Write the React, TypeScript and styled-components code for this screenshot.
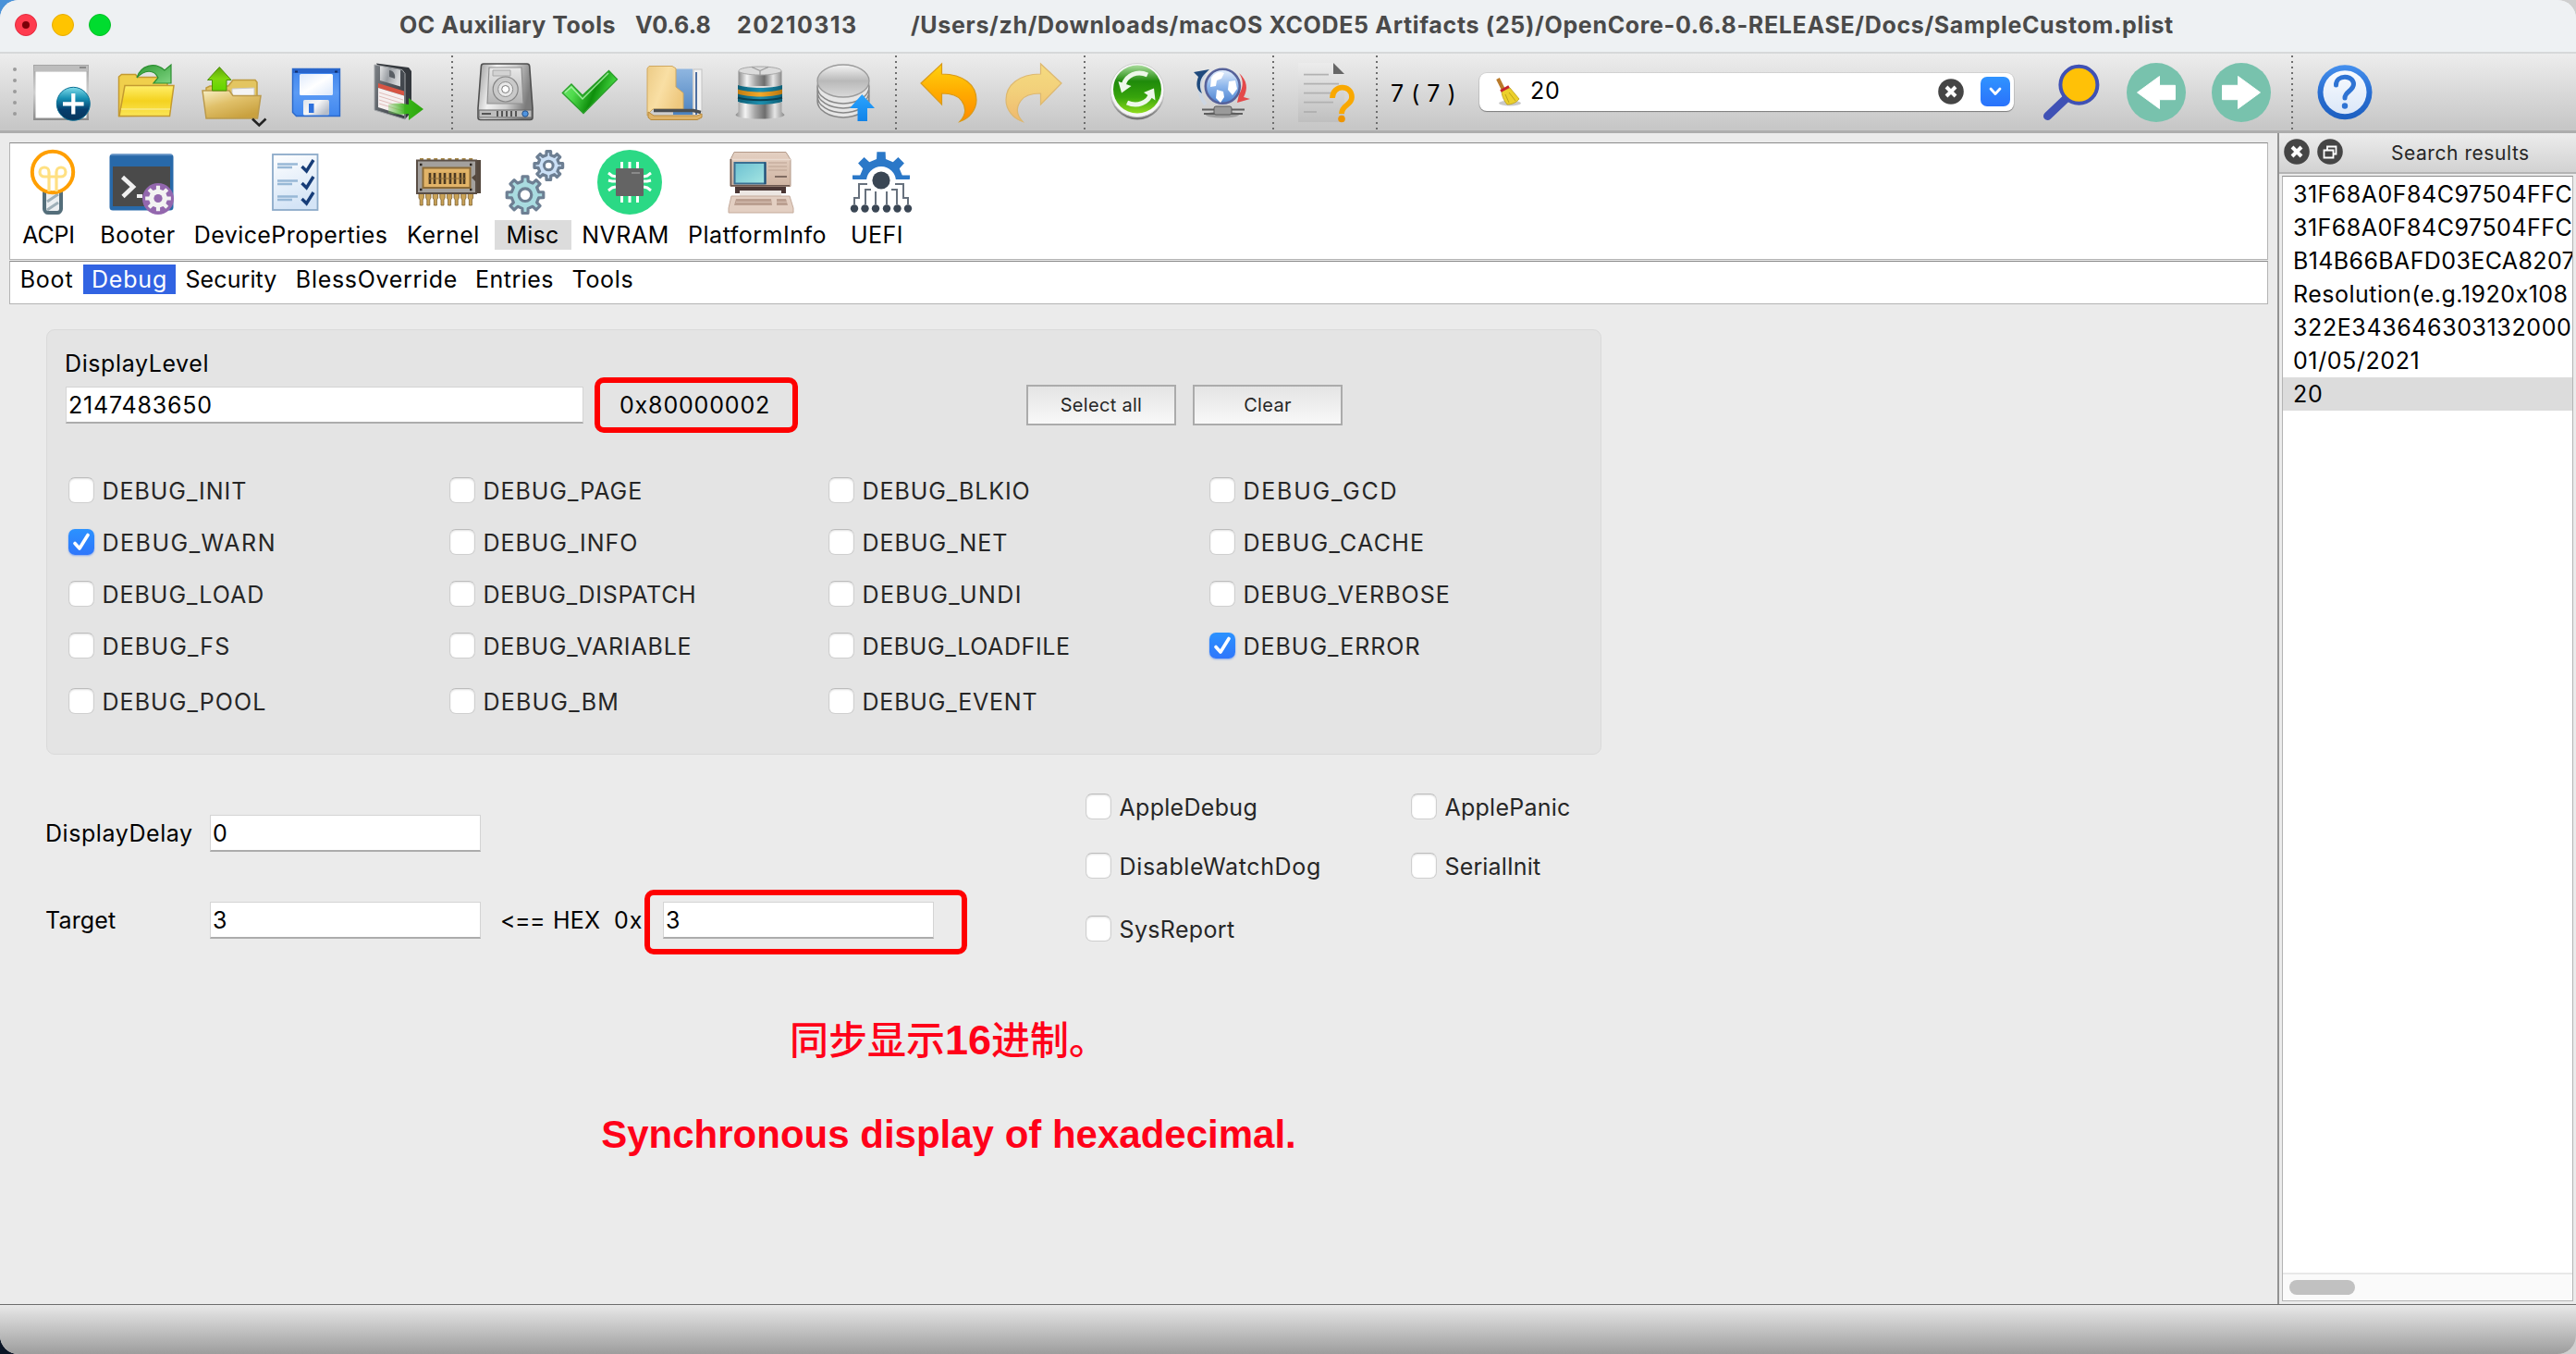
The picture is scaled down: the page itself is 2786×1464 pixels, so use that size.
import React from "react";
import styled, { createGlobalStyle, css } from "styled-components";

const Global = createGlobalStyle`
  html, body { margin: 0; padding: 0; }
  body {
    font-family: Inter, "Noto Sans CJK SC", sans-serif;
    font-size: 25px;
    line-height: 32px;
    color: #000;
    font-feature-settings: "calt" 0, "liga" 0;
    overflow: hidden;
  }
  *, *::before, *::after { box-sizing: border-box; }
`;

/* ---------- window chrome ---------- */

const Desktop = styled.div`
  width: 2786px;
  height: 1464px;
  background:
    linear-gradient(90deg, transparent 50%, #cfcfcf 50%),
    linear-gradient(180deg, #4a92d8 0%, #4a92d8 40%, #0b1526 60%);
`;

const Window = styled.div`
  display: flex;
  flex-direction: column;
  width: 2786px;
  height: 1464px;
  overflow: hidden;
  border-radius: 20px;
  background: #ebebeb;
`;

const TitleBar = styled.header`
  display: flex;
  align-items: center;
  flex: none;
  height: 58px;
  padding: 0 16px 3px;
  background: #eef1f3;
  border-bottom: 2px solid #d6d8d9;
`;

const Lights = styled.div`
  display: flex;
  gap: 16px;
  width: 416px;
`;

const Light = styled.span<{ $fill: string; $rim: string }>`
  display: grid;
  place-items: center;
  width: 24px;
  height: 24px;
  border-radius: 50%;
  background: ${(p) => p.$fill};
  border: 1px solid ${(p) => p.$rim};
`;

const LightDot = styled.i`
  width: 8px;
  height: 8px;
  border-radius: 50%;
  background: #7a0008;
`;

const TitlePart = styled.span<{ $width: number; $track: number }>`
  width: ${(p) => p.$width}px;
  font-weight: 700;
  letter-spacing: ${(p) => p.$track}px;
  color: #4a4a4a;
  white-space: pre;
`;

/* ---------- toolbar ---------- */

const Toolbar = styled.div`
  display: flex;
  align-items: center;
  flex: none;
  height: 86px;
  padding: 1px 0 0 14px;
  background: linear-gradient(180deg, #ededed 0%, #c7c7c7 96%);
  border-bottom: 3px solid #adadad;
`;

const Handle = styled.div`
  display: flex;
  flex-direction: column;
  gap: 8px;
  width: 20px;
  margin-top: -3px;

  i {
    width: 4px;
    height: 4px;
    border-radius: 50%;
    background: #9b9b9b;
  }
`;

const ToolGroup = styled.div`
  display: flex;
  gap: 28px;
`;

const Tool = styled.button`
  display: block;
  width: 64px;
  height: 64px;
  padding: 0;
  border: 0;
  background: none;
`;

const Separator = styled.div`
  width: 48px;
  height: 80px;
  padding-left: 22px;

  &::before {
    content: "";
    display: block;
    width: 2px;
    height: 100%;
    background: repeating-linear-gradient(180deg, #6e6e6e 0 2px, transparent 2px 6px);
  }
`;

const MatchCount = styled.div`
  width: 97px;
  margin-left: -11px;
  padding: 2px 0 0 1px;
  letter-spacing: 0.5px;
  white-space: pre;
`;

const SearchBox = styled.div`
  display: flex;
  align-items: center;
  width: 578px;
  height: 41px;
  margin: -2px 30px 0 0;
  padding: 0 4px 0 16px;
  border-radius: 8px;
  background: #fff;
  box-shadow: 0 1px 1px rgba(0, 0, 0, 0.35), 0 0 0 1px rgba(0, 0, 0, 0.08);
`;

const SearchValue = styled.span`
  flex: 1;
  margin-left: 9px;
  padding-bottom: 2px;
  letter-spacing: 0.7px;
`;

const ComboButton = styled.span`
  display: grid;
  place-items: center;
  width: 32px;
  height: 32px;
  margin-left: 18px;
  border-radius: 7px;
  background: linear-gradient(180deg, #2f93ff, #2a72fb);
`;

/* ---------- body ---------- */

const Body = styled.div`
  display: flex;
  flex: 1;
  min-height: 0;
`;

const Main = styled.main`
  width: 2463px;
  padding: 10px 10px 0;
`;

const frame = css`
  display: flex;
  border: 1px solid #b4b4b4;
  border-top-color: #8a8a8a;
  background: #fff;
`;

const CategoryBar = styled.nav`
  ${frame}
  height: 127px;
  margin-bottom: 1px;
  padding: 7px 0 0 1px;
`;

const Category = styled.div<{ $width: number; $shift?: number }>`
  display: flex;
  flex-direction: column;
  gap: 6px;
  align-items: center;
  width: ${(p) => p.$width}px;

  svg {
    display: block;
    position: relative;
    left: ${(p) => p.$shift ?? 4}px;
  }
`;

const CategoryLabel = styled.span<{ $active?: boolean; $track: number }>`
  padding: 0 13px;
  background: ${(p) => (p.$active ? "#dcdcdc" : "transparent")};
  letter-spacing: ${(p) => p.$track}px;
`;

const TabBar = styled.nav`
  ${frame}
  height: 47px;
  padding-top: 3px;
`;

const Tab = styled.span<{ $width: number; $track: number; $active?: boolean }>`
  width: ${(p) => p.$width}px;
  height: 32px;
  text-align: center;
  letter-spacing: ${(p) => p.$track}px;
  background: ${(p) => (p.$active ? "#3163e2" : "transparent")};
  color: ${(p) => (p.$active ? "#fff" : "#000")};
`;

const LevelPanel = styled.section`
  width: 1682px;
  height: 460px;
  margin: 27px 0 0 40px;
  padding: 22px 20px 0;
  border: 1px solid #dadada;
  border-radius: 9px;
  background: #e4e4e4;
`;

const Text = styled.span<{ $track?: number; $width?: number; $nudge?: number }>`
  display: block;
  flex: none;
  width: ${(p) => (p.$width ? `${p.$width}px` : "auto")};
  margin-left: ${(p) => p.$nudge ?? 0}px;
  letter-spacing: ${(p) => p.$track ?? 0.6}px;
  line-height: 28px;
  white-space: pre;
`;

const Field = styled.div<{ $width: number }>`
  flex: none;
  width: ${(p) => p.$width}px;
  height: 40px;
  padding: 1px 0 0 2px;
  border: 1px solid #d4d4d4;
  border-bottom: 2px solid #acacac;
  background: #fff;
  line-height: 36px;
  letter-spacing: 0.8px;
`;

const LevelRow = styled.div`
  display: flex;
  align-items: center;
  height: 44px;
  margin-top: 9px;
`;

const Callout = styled.div<{ $width: number; $height: number; $drop?: number }>`
  display: flex;
  flex: none;
  align-items: center;
  width: ${(p) => p.$width}px;
  height: ${(p) => p.$height}px;
  margin-top: ${(p) => p.$drop ?? 0}px;
  padding-bottom: ${(p) => p.$drop ?? 0}px;
  border: 6px solid #fe0000;
  border-radius: 10px;
`;

const PushButton = styled.button`
  width: 162px;
  height: 44px;
  margin-right: 18px;
  padding: 0;
  border: 2px solid #ababab;
  background: linear-gradient(180deg, #e4e4e4, #f8f8f8);
  font: 20px/38px Inter, sans-serif;
  letter-spacing: 0.3px;
  color: #262626;
`;

const Spacer = styled.div<{ $width: number }>`
  flex: none;
  width: ${(p) => p.$width}px;
`;

const FlagGrid = styled.div`
  display: grid;
  grid-template-columns: 412px 410px 412px auto;
  grid-template-rows: 56px 56px 56px 60px 28px;
  grid-auto-flow: column;
  margin: 56px 0 0 3px;
`;

const Check = styled.label<{ $track: number }>`
  display: flex;
  gap: 8.5px;
  height: 28px;
  line-height: 30px;
  color: #262626;
  letter-spacing: ${(p) => p.$track - 0.15}px;
`;

const Tick = styled.span<{ $on?: boolean }>`
  display: grid;
  place-items: center;
  width: 28px;
  height: 28px;
  border-radius: 7px;
  ${(p) =>
    p.$on
      ? css`
          background: linear-gradient(180deg, #2b92ff, #2f76fb);
          box-shadow: 0 1px 2px rgba(40, 110, 250, 0.5);
        `
      : css`
          background: #fff;
          border: 1px solid #cfcfcf;
          border-top-color: #bcbcbc;
          box-shadow: inset 0 1px 2px rgba(0, 0, 0, 0.12);
        `}
`;

const Lower = styled.section`
  display: flex;
  padding-left: 39px;
`;

const Fields = styled.div`
  display: flex;
  flex-direction: column;
  gap: 54px;
  width: 1125px;
  padding-top: 65px;
`;

const FieldRow = styled.div`
  display: flex;
  align-items: center;
  height: 40px;
`;

const Options = styled.div`
  display: grid;
  grid-template-columns: 352px auto;
  grid-template-rows: 64px 68px 28px;
  padding-top: 42px;
`;

const Notes = styled.div`
  width: 800px;
  margin: 59px 0 0 616px;
  text-align: center;
  font: 700 42px/100px "Liberation Sans", "Noto Sans CJK SC", sans-serif;
  color: #ff0019;
  white-space: nowrap;

  p {
    height: 100px;
    margin: 0;
  }

  p:first-child {
    line-height: 90px;
  }
`;

const Han = styled.span`
  font-weight: 500;
  font-family: "Noto Sans CJK SC", sans-serif;
`;

const Digits = styled.span`
  font-size: 45px;
`;

/* ---------- dock ---------- */

const Dock = styled.aside`
  display: flex;
  flex-direction: column;
  width: 323px;
  border-left: 2px solid #929292;
`;

const DockHeader = styled.div`
  display: flex;
  align-items: center;
  gap: 8px;
  height: 44px;
  padding: 0 0 2px 5px;
  border-bottom: 2px solid #b4b4b4;
  background: linear-gradient(180deg, #ececec, #d2d2d2);
`;

const DockTitle = styled.span`
  margin-left: 44px;
  padding-top: 4px;
  font-size: 21px;
  letter-spacing: 0.55px;
  color: #262626;
`;

const ResultList = styled.div`
  display: flex;
  flex-direction: column;
  flex: 1;
  margin: 2px 3px 3px 3px;
  border: 1px solid #b4b4b4;
  border-top-color: #8a8a8a;
  background: #fff;
  overflow: hidden;
`;

const Result = styled.div<{ $track: number; $active?: boolean }>`
  flex: none;
  height: 36px;
  padding-left: 11px;
  line-height: 36px;
  letter-spacing: ${(p) => p.$track}px;
  white-space: nowrap;
  background: ${(p) => (p.$active ? "#dcdcdc" : "transparent")};

  &:first-child {
    margin-top: 1px;
  }
`;

const ScrollTrack = styled.div`
  height: 30px;
  margin-top: auto;
  padding: 6px 7px;
  border-top: 2px solid #e8e8e8;
  background: #fafafa;
`;

const ScrollThumb = styled.div`
  width: 71px;
  height: 16px;
  border-radius: 8px;
  background: #c1c1c1;
`;

const StatusBar = styled.footer`
  flex: none;
  height: 54px;
  border-top: 1px solid #6c6c6c;
  background: linear-gradient(180deg, #e8e8e8, #9d9d9d);
`;

/* ---------- toolbar icons, drawn on a 64 unit square ---------- */

const Icon = ({ children, size = 64 }: { children: React.ReactNode; size?: number }) => (
  <svg width={size} height={size} viewBox={`0 0 ${size} ${size}`} overflow="visible" fill="none" display="block">
    {children}
  </svg>
);

const Grad = ({ id, stops, x2 = 0, y2 = 1 }: { id: string; stops: string[]; x2?: number; y2?: number }) => (
  <linearGradient id={id} x1="0" y1="0" x2={x2} y2={y2}>
    {stops.map((c, i) => (
      <stop key={i} offset={i / (stops.length - 1)} stopColor={c} />
    ))}
  </linearGradient>
);

const NewDocIcon = () => (
  <Icon>
    <Grad id="nd1" stops={["#a5a5a5", "#cfcfcf", "#8b8b8b"]} />
    <Grad id="nd2" stops={["#7fdcea", "#1791b4", "#063f6e", "#08355c"]} />
    <rect x="2" y="2" width="60" height="60" fill="url(#nd1)" />
    <rect x="3" y="3" width="58" height="6" fill="#bdbdbd" />
    <path d="M52 5h7" stroke="#8a8a8a" strokeWidth="2" />
    <rect x="4.500" y="9.500" width="55" height="50" fill="#fff" />
    <circle cx="45.300" cy="44.300" r="18" fill="url(#nd2)" stroke="#0d6f94" strokeWidth="1" />
    <path d="M45.300 33v22.500M34 44.300h22.600" stroke="#fff" strokeWidth="4.200" />
  </Icon>
);

const OpenIcon = () => (
  <Icon>
    <Grad id="op1" stops={["#ffef6b", "#f4d21f", "#fbe658"]} />
    <Grad id="op2" stops={["#2f9a34", "#7fd482"]} x2={1} />
    <path d="M2.500 57.500V15l3-2.500h15l2.500 3h29l3 4V57z" fill="#f0cf4c" stroke="#c49a30" strokeWidth="1.500" />
    <path d="M9 24.500h53L57.500 57.500H3z" fill="url(#op1)" stroke="#c49a30" strokeWidth="1.500" />
    <path d="M5 50h53" stroke="#f9ea86" strokeWidth="1.500" />
    <path d="M22 16C26 3 41-2 52 8l7-6v20H40l5-6C40 6 30 8 22 16z" fill="url(#op2)" stroke="#2c8f31" strokeWidth="1.200" />
  </Icon>
);

const ImportIcon = () => (
  <Icon>
    <Grad id="im1" stops={["#f8efc4", "#e0c069", "#c9a13f"]} x2={0.6} />
    <Grad id="im2" stops={["#5fa30c", "#7fd80f", "#62d400"]} />
    <path d="M5 58V27l4-2h20l5-6.500h24l2 2.500v34z" fill="#e3c561" stroke="#bf9c40" strokeWidth="1.500" />
    <path d="M33 28l24-1v9H33z" fill="#f4f4f4" stroke="#c9c9c9" strokeWidth="1" />
    <path d="M1 30h29l4 5.500h30L60.500 60H5z" fill="url(#im1)" stroke="#bb9a4c" strokeWidth="1.500" />
    <path d="M19.300 4.500L32 18.500h-5V30H11.500V18.500h-5z" fill="url(#im2)" stroke="#4d8f0a" strokeWidth="1" />
    <path d="M55 60.500l7.300 7 7.200-7" stroke="#222" strokeWidth="2.600" />
  </Icon>
);

const SaveIcon = () => (
  <Icon>
    <Grad id="sv1" stops={["#3f84ec", "#5b9bf5", "#4187ee"]} />
    <Grad id="sv2" stops={["#dfeafc", "#ffffff", "#dbe8fb"]} x2={1} />
    <Grad id="sv3" stops={["#dfe3ea", "#f7f7f7", "#b6bdc9"]} x2={1} y2={0.6} />
    <path d="M6.500 6.500h51v51h-47l-4-4z" fill="url(#sv1)" stroke="#2b68c9" strokeWidth="1.400" />
    <path d="M7 7h50v4H7z" fill="#2965cc" />
    <path d="M9 9.500h3M52 9.500h3" stroke="#102f6c" strokeWidth="2" />
    <rect x="14" y="12" width="36" height="23" rx="1.500" fill="url(#sv2)" />
    <rect x="18" y="40" width="28" height="16.500" rx="1.500" fill="url(#sv3)" />
    <rect x="24" y="44" width="5.500" height="10" fill="#2e71dc" />
  </Icon>
);

const ExportIcon = () => (
  <Icon>
    <Grad id="ex1" stops={["rgba(120,200,95,0.35)", "#39b51a", "#2ba60c"]} x2={1} y2={0} />
    <Grad id="ex2" stops={["#7d8186", "#565b61", "#3f444a"]} x2={1} y2={0.4} />
    <Grad id="ex3" stops={["#e4e5e6", "#9a9ea3", "#d6d8da"]} x2={1} y2={0.3} />
    <path d="M5 0.500l35 4.500 3 4v44l-7 8z" fill="#34383d" />
    <path d="M3 2l30 5.500 3 4V61L3 51z" fill="url(#ex2)" stroke="#a4a7aa" strokeWidth="1" />
    <path d="M9 3.500l22 4v18L9 19z" fill="url(#ex3)" />
    <path d="M19 8c4 0 7 4 6 9l-6-2z" fill="#5a5f65" />
    <path d="M7 22l28 8.500v5L7 27z" fill="#d75443" />
    <path d="M7 27l28 8.500V57L7 48z" fill="#f6f0f0" />
    <path d="M8 32l26 8M8 36l26 8M8 40l26 8M8 44l26 8" stroke="#e0bdba" strokeWidth="1" />
    <path d="M18 45c8-2 14-1 22 0v-7l16 12-16 12v-7c-8 1-14 1-22-1z" fill="url(#ex1)" />
  </Icon>
);

const DiskIcon = () => (
  <Icon>
    <Grad id="hd1" stops={["#9a9a9a", "#f2f2f2", "#cfcfcf", "#7c7c7c"]} x2={1} y2={0.25} />
    <Grad id="hd2" stops={["#e9e9e9", "#b4b4b4"]} />
    <path d="M9 1h47c1.500 0 2.500 1 2.700 2.500L62 49v10c0 1.500-1 2.500-2.500 2.500h-54C4 61.500 3 60.500 3 59V49L6.400 3.500C6.500 2 7.500 1 9 1z" fill="url(#hd1)" stroke="#4f4f4f" strokeWidth="1.600" />
    <path d="M15 5h35l2 39H13z" fill="url(#hd2)" stroke="#8f8f8f" strokeWidth="1.200" />
    <path d="M19 8h19v6H19z" fill="#d3d3d3" stroke="#a8a8a8" strokeWidth="1" />
    <circle cx="32.700" cy="28.500" r="13.500" fill="#c9c9c9" stroke="#858585" strokeWidth="1.200" />
    <circle cx="32.700" cy="28.500" r="8" fill="#e8e8e8" stroke="#8d8d8d" strokeWidth="1" />
    <circle cx="32.700" cy="28.500" r="4" fill="#fff" stroke="#777" strokeWidth="1" />
    <path d="M4 51h57v8H4z" fill="#bdbdbd" stroke="#666" strokeWidth="1" />
    <path d="M7 55h10M24 52v6M29 52v6M34 52v6M39 52v6M44 52v6" stroke="#555" strokeWidth="2" />
    <circle cx="54" cy="55" r="3.200" fill="#4f94e0" stroke="#234f86" strokeWidth="1" />
  </Icon>
);

const CheckIcon = () => (
  <Icon>
    <Grad id="ck1" stops={["#7ee87c", "#4fdb4c", "#0f8f0c", "#4be048"]} x2={1} y2={0.3} />
    <path d="M2.300 32.500L12 23l12 12.300L52.500 8.300l9 9.500L25 54.500z" fill="url(#ck1)" stroke="#2a9e2a" strokeWidth="1.300" />
    <path d="M5 32l7-6 12 13L52 11" stroke="#b8f5b5" strokeWidth="1.500" opacity="0.8" />
  </Icon>
);

const BinderIcon = () => (
  <Icon>
    <Grad id="bd1" stops={["#eccb86", "#f9dfa4", "#eec87e"]} x2={1} y2={0.5} />
    <Grad id="bd2" stops={["#8fb6e0", "#4d83c0"]} />
    <rect x="52" y="7" width="9" height="50" fill="#f2f2f2" stroke="#c2c2c2" strokeWidth="1" />
    <path d="M55 10v46" stroke="#3a5f97" strokeWidth="1.800" />
    <path d="M30 6.500h21V56H30z" fill="url(#bd2)" />
    <path d="M4 3.500h25l4 2.500v20l8 6.500V50H8l-3 3-3 4V6z" fill="url(#bd1)" stroke="#cfa861" strokeWidth="1" />
    <path d="M9 51.500h43l8 2" stroke="#4b4f52" strokeWidth="3.600" />
    <path d="M3 53v6l3 2.500h50l5-2.500v-4l-5 2H9z" fill="#dfb368" stroke="#b98a3c" strokeWidth="1" />
  </Icon>
);

const DatabaseIcon = () => (
  <Icon>
    <Grad id="db1" stops={["#8a8a8a", "#f4f4f4", "#a5a5a5", "#6d6d6d", "#e6e6e6", "#8b8b8b"]} x2={1} y2={0} />
    <Grad id="db2" stops={["#0c5f77", "#1e8fae", "#0d6078"]} x2={1} y2={0} />
    <Grad id="db3" stops={["#c07c12", "#f3a929", "#b8760f"]} x2={1} y2={0} />
    <path d="M8.500 43h47v10l3 3c0 3-12 4.500-26.500 4.500S5.500 59 5.500 56l3-3z" fill="url(#db1)" />
    <path d="M8.500 9c6-6 41-6 47 0v16h-47z" fill="url(#db1)" />
    <ellipse cx="32" cy="8.500" rx="23" ry="4.500" fill="#dcdcdc" stroke="#a8a8a8" strokeWidth="1" />
    <path d="M32 8.500l-9-4M32 8.500l9-4M32 8.500V13" stroke="#999" strokeWidth="1.200" />
    <path d="M8 24c12 4 36 4 48 0v18c-12 4-36 4-48 0z" fill="url(#db2)" />
    <path d="M8 28.500c12 4 36 4 48 0v5c-12 4-36 4-48 0z" fill="url(#db3)" />
    <path d="M8 37.500c12 3.600 36 3.600 48 0" stroke="#083f50" strokeWidth="2" />
  </Icon>
);

const StackUpIcon = () => (
  <Icon>
    <Grad id="st1" stops={["#f4f4f4", "#b9b9b9", "#d9d9d9"]} />
    <Grad id="st2" stops={["#2aa4ff", "#1183e8"]} />
    {[41, 36, 31, 26].map((y) => (
      <ellipse key={y} cx="30" cy={y} rx="28" ry="18" fill="#e6e6e6" stroke="#868686" strokeWidth="1.500" />
    ))}
    <ellipse cx="30" cy="19.500" rx="28" ry="17.500" fill="url(#st1)" stroke="#9b9b9b" strokeWidth="1.300" />
    <path d="M50.300 34L64 49h-8v14H45.500V49H37z" fill="url(#st2)" />
  </Icon>
);

const arrowPath = "M2 22L24.500 1v11C48 12 62 24 62 40c0 10-7 20-18 23.500C51 56 51 48 46 41c-4-6-12-8-21.500-8v12z";

const UndoIcon = () => (
  <Icon>
    <Grad id="un1" stops={["#ffd30f", "#ffab00", "#ff8a00"]} />
    <path d={arrowPath} fill="url(#un1)" stroke="#d99a1a" strokeWidth="1.200" />
  </Icon>
);

const RedoIcon = () => (
  <Icon>
    <Grad id="re1" stops={["#f5dc80", "#f2cf7a", "#efb86d"]} />
    <path d={arrowPath} fill="url(#re1)" stroke="#ddb870" strokeWidth="1.200" transform="translate(64 0) scale(-1 1)" />
  </Icon>
);

const RefreshIcon = () => (
  <Icon>
    <Grad id="rf1" stops={["#ffffff", "#d8d8d8", "#6f6f6f"]} />
    <Grad id="rf2" stops={["#a9dc9c", "#1f8a0a", "#37a40c", "#8fdc1c"]} />
    <circle cx="32" cy="32" r="29.500" fill="url(#rf1)" />
    <circle cx="32" cy="29.500" r="29" fill="#f6f6f6" stroke="#cfcfcf" strokeWidth="1" />
    <circle cx="32" cy="28.500" r="26" fill="url(#rf2)" />
    <path d="M17 24C20 13 32 8 43 13" stroke="#eef7ea" strokeWidth="5" />
    <path d="M11.500 20l3.500 12.500L25.500 25z" fill="#eef7ea" />
    <path d="M47 33C44 43 32 48 21 43" stroke="#eef7ea" strokeWidth="5" />
    <path d="M39 32l11-4.500 1.500 13z" fill="#eef7ea" />
  </Icon>
);

const GlobeIcon = () => (
  <Icon>
    <Grad id="gl1" stops={["#e8f1fc", "#8db6ec", "#4b82cf"]} />
    <ellipse cx="32" cy="56" rx="18" ry="3.500" fill="#8c8c8c" opacity="0.7" />
    <path d="M10 50.500h46M12 55h42" stroke="#5e5e5e" strokeWidth="2" />
    <rect x="23" y="47" width="19" height="9" rx="2" fill="#9a9a9a" stroke="#5b5b5b" strokeWidth="1" />
    <path d="M14 45C5 34 6 20 13 12" stroke="#cdd6e2" strokeWidth="4" />
    <path d="M10 33C6 24 8 16 14 11l4-4L1 10l5 5c-3 8-2 14 4 18z" fill="#1f4a7d" />
    <path d="M50 11c9 8 10 17 5 26l7 2-14 4 2-9c5-8 5-16 0-23z" fill="#e4494a" />
    <circle cx="32.300" cy="25.300" r="18.500" fill="url(#gl1)" stroke="#56629a" strokeWidth="2.600" />
    <path d="M20 16c4-6 10-7 14-5l-3 6-5 2-1 6-6 1zM26 29l7 2 1 6-4 6-5-5zM39 20l7-1 2 9-5 7-5-6z" fill="#fff" />
  </Icon>
);

const DocHelpIcon = () => (
  <Icon>
    <Grad id="dh1" stops={["#ececec", "#bfbfbf"]} />
    <path d="M2 0h38l12 12v52H2z" fill="url(#dh1)" />
    <path d="M40 0l12 12H40z" fill="#666" />
    <path d="M8 12.700h27M8 22.700h38M8 32.700h32M8 42.700h32M8 53h14" stroke="#b1b1b1" strokeWidth="1.800" />
    <path d="M39 38c0-15 21-15 21-1 0 9-11 8-11 18" stroke="#f9a800" strokeWidth="5.800" />
    <circle cx="49" cy="60.500" r="3.800" fill="#ee9500" />
  </Icon>
);

const BroomIcon = () => (
  <svg width="30" height="32" viewBox="0 0 30 32" fill="none" display="block">
    <ellipse cx="17" cy="28.500" rx="12" ry="3" fill="#c9c9c9" />
    <path d="M4 2l6 12" stroke="#b97a2b" strokeWidth="4" />
    <path d="M8 15l9-3 10 12c-3 4-8 6-13 6C10 25 8 20 8 15z" fill="#ecd02c" stroke="#b79c1c" strokeWidth="0.800" />
    <path d="M12 19l4 9M16 17l7 9" stroke="#bda31c" strokeWidth="1" />
    <path d="M7 15.500l9-5" stroke="#c6222d" strokeWidth="3" />
  </svg>
);

const FindIcon = () => (
  <Icon>
    <path d="M27 38L6.500 57.500" stroke="#3f51b5" strokeWidth="9" strokeLinecap="round" />
    <circle cx="40.400" cy="23.700" r="20" fill="#ffc107" stroke="#3f51b5" strokeWidth="4" />
  </Icon>
);

const ArrowIcon = ({ flip }: { flip?: boolean }) => (
  <Icon>
    <g transform={flip ? "translate(64 0) scale(-1 1)" : undefined}>
      <circle cx="32" cy="32" r="32" fill="#78c2ad" />
      <path d="M11.500 32L35.500 14.500v9.800H52.500v15.400H35.500v9.800z" fill="#fff" strokeLinejoin="round" stroke="#fff" strokeWidth="1" />
    </g>
  </Icon>
);

const HelpIcon = () => (
  <Icon>
    <Grad id="hp1" stops={["#4590ee", "#2a6fd2", "#1c5fc0"]} />
    <Grad id="hp2" stops={["#f8fbff", "#dbe7f8"]} />
    <circle cx="32" cy="31.700" r="29.500" fill="url(#hp1)" />
    <circle cx="32" cy="31.700" r="23.500" fill="url(#hp2)" />
    <path d="M22.500 24c0-12 19-11 19-1 0 7-9.500 8-9.500 15" stroke="#2e73d3" strokeWidth="5" strokeLinecap="round" />
    <circle cx="32" cy="46.500" r="3.200" fill="#2e73d3" />
  </Icon>
);

const RoundButton = ({ kind }: { kind: "close" | "float" }) => (
  <svg width="28" height="28" viewBox="0 0 28 28" fill="none">
    <circle cx="14" cy="14" r="13.800" fill="#454545" />
    {kind === "close" ? (
      <path d="M9 9l10 10M19 9L9 19" stroke="#fff" strokeWidth="4" />
    ) : (
      <path d="M7.500 12.500h10v8h-10zM11 12V8.500h9.500v8H18" stroke="#fff" strokeWidth="1.800" />
    )}
  </svg>
);

/* ---------- category icons, drawn on a 70 unit square ---------- */

const gear = (cx: number, cy: number, outer: number, inner: number, teeth: number) => {
  const step = (Math.PI * 2) / teeth;
  const at = (r: number, a: number) => `${(cx + r * Math.sin(a)).toFixed(2)} ${(cy - r * Math.cos(a)).toFixed(2)}`;
  const pts: string[] = [];
  for (let i = 0; i < teeth; i++) {
    const a = i * step;
    pts.push(at(inner, a - step * 0.27), at(outer, a - step * 0.19), at(outer, a + step * 0.19), at(inner, a + step * 0.27));
  }
  return `M${pts.join("L")}Z`;
};

const BulbIcon = () => (
  <Icon size={70}>
    <path d="M26 44h18v20c0 2-2 4-4 4H30c-2 0-4-2-4-4z" fill="#eceff1" stroke="#546e7a" strokeWidth="4" />
    <path d="M29 56l12-8M29 65l12-8" stroke="#9fb0b8" strokeWidth="3" />
    <circle cx="35" cy="24" r="22.200" fill="#fff" stroke="#ff9f00" strokeWidth="4" />
    <path d="M31 45V24a5 5 0 1 0-5 5h18a5 5 0 1 0-5-5v21" stroke="#ffe082" strokeWidth="3.200" />
  </Icon>
);

const TerminalIcon = () => (
  <Icon size={70}>
    <rect x="0.500" y="4.500" width="69" height="61" rx="3.500" fill="#2869a9" />
    <path d="M2 5.500h66" stroke="#5d8fc4" strokeWidth="1.600" />
    <rect x="4" y="18" width="62" height="43" fill="#4a4a4a" />
    <path d="M14.500 29.500L26 40 15 50.500" stroke="#f0f0f0" strokeWidth="4.600" />
    <rect x="30" y="48" width="6" height="4" fill="#f0f0f0" />
    <circle cx="53" cy="53" r="17" fill="#9367ae" />
    <path d={gear(53, 52.5, 14, 10, 8)} fill="#f2f2f2" />
    <circle cx="53" cy="52.500" r="4.600" fill="#9367ae" />
  </Icon>
);

const ChecklistIcon = () => (
  <Icon size={70}>
    <Grad id="cl1" stops={["#ffffff", "#d4e4f6"]} x2={0.3} />
    <rect x="11" y="5" width="48.500" height="60" fill="url(#cl1)" stroke="#8caac9" strokeWidth="1.800" />
    {[17, 35, 52].map((y) => (
      <g key={y}>
        <path d={`M16 ${y - 1.5}h22M16 ${y + 2}h16`} stroke="#98b8d6" strokeWidth="2.400" />
        <path d={`M42.500 ${y + 1}l5 5L55 ${y - 6}`} stroke="#173d78" strokeWidth="3.400" />
      </g>
    ))}
  </Icon>
);

const ChipIcon = () => (
  <Icon size={70}>
    {Array.from({ length: 8 }, (_, i) => (
      <g key={i}>
        <path d={`M${4 + i * 7.6} 9h4v4h-4z`} fill="#a98a4a" />
        <path d={`M${3 + i * 7.6} 47h5.400v5l-1.200 2v6h-3v-6l-1.200-2z`} fill="#c9a257" stroke="#7b5e2c" strokeWidth="0.800" />
      </g>
    ))}
    <path d="M64 11h6v36h-6z" fill="#55493f" />
    <rect x="1" y="11.500" width="64" height="35.500" fill="#a3a09d" stroke="#5a4e45" strokeWidth="2" />
    <path d="M65 26l-5 4 5 5z" fill="#55493f" />
    <path d="M4 16h2.500M58 16h2.500M4 43h2.500M58 43h2.500" stroke="#2c2622" strokeWidth="2.500" />
    <rect x="7.500" y="19.500" width="51" height="21.500" fill="#e2b468" stroke="#8a6a36" strokeWidth="2" />
    <rect x="13" y="24" width="41" height="13" fill="#c3985050" />
    <path d="M15 25v12M20 25v12M26 25v12M31 25v12M37 25v12M42 25v12M48 25v12M52 25v12" stroke="#4d3b22" strokeWidth="2.600" />
    <path d="M13 31h41" stroke="#8a6c3a" strokeWidth="1" />
  </Icon>
);

const GearsIcon = () => (
  <Icon size={70}>
    <path d={gear(50.3, 17, 15.5, 11.5, 8)} fill="#cbe0f6" stroke="#6d7f93" strokeWidth="3.200" strokeLinejoin="round" />
    <circle cx="50.300" cy="17" r="4.800" fill="#fff" stroke="#6d7f93" strokeWidth="3" />
    <path d={gear(25, 48.7, 20, 15, 8)} fill="#a9dbe0" stroke="#6d7f93" strokeWidth="3.200" strokeLinejoin="round" />
    <circle cx="25" cy="48.700" r="6.800" fill="#fff" stroke="#6d7f93" strokeWidth="3.200" />
  </Icon>
);

const NvramIcon = () => (
  <Icon size={70}>
    <circle cx="35" cy="35" r="35" fill="#2bd985" />
    <path
      d="M26.500 13v7M35 13v7M43.500 13v7M26.500 50v7M35 50v7M43.500 50v7M20 29l-4-1-4-3M20 34h-4l-4-1M20 40l-4 1-4 3M50 29l4-1 4-3M50 34h4l4-1M50 40l4 1 4 3"
      stroke="#fff"
      strokeWidth="3"
    />
    <rect x="20" y="20" width="30" height="30" rx="1" fill="#646464" />
    <path d="M37 25h9" stroke="#8a8a8a" strokeWidth="2" />
  </Icon>
);

const ComputerIcon = () => (
  <Icon size={70}>
    <Grad id="pc1" stops={["#e4d0c2", "#cfb4a2"]} />
    <Grad id="pc2" stops={["#6cc0d2", "#a5e6e2"]} x2={1} />
    <path d="M6 2.500h56l5 8v29H2v-29z" fill="url(#pc1)" stroke="#b39a8a" strokeWidth="1" />
    <path d="M2 10.500h65" stroke="#e9dbd0" strokeWidth="1.500" />
    <path d="M2.500 10v29M2 38.800h64" stroke="#6d5850" strokeWidth="1.600" />
    <rect x="6.500" y="14" width="33" height="22.500" fill="url(#pc2)" stroke="#3a6f92" strokeWidth="2" />
    <path d="M39.500 13.500v23.500" stroke="#1f4f78" strokeWidth="2" />
    <path d="M43 14h20M43 18h20M43 22h20" stroke="#bda494" strokeWidth="1" />
    <path d="M50 29h13" stroke="#6b5850" strokeWidth="1.600" />
    <path d="M7 40h55v7H7z" fill="#4b3735" />
    <path d="M12 44h45v6H12z" fill="#ece6e2" />
    <path d="M3 50h63l4 13v5H0v-5z" fill="#e3cfc2" stroke="#c4aa9b" strokeWidth="1" />
    <path d="M8 53h38l1 7H6zM52 53h10l2 7H52z" fill="#bb9f90" />
    <path d="M8 56.500h38M52 56.500h11" stroke="#d6bfb1" strokeWidth="1" />
  </Icon>
);

const UefiIcon = () => (
  <Icon size={70}>
    <clipPath id="uf1">
      <path d="M0 0h70v32H0z" />
    </clipPath>
    <g clipPath="url(#uf1)">
      <path d={gear(35, 33, 31, 23.5, 8)} fill="#2b78c8" />
      <circle cx="35" cy="34" r="16" fill="#fff" />
    </g>
    <path d="M4 27.500h13v4H4zM53 27.500h13v4H53z" fill="#2b78c8" />
    <circle cx="35" cy="33" r="9.600" fill="#3a4654" />
    <path
      d="M20 37h-9v15H6v7M50 37h9v15h5v7M24 43h-6v16M46 43h6v16M29 45v14M41 45v14"
      stroke="#67717d"
      strokeWidth="2"
    />
    {[6, 17.5, 29, 41, 52.5, 64].map((x) => (
      <circle key={x} cx={x} cy="63.500" r="4.200" fill="#3a4654" />
    ))}
  </Icon>
);

/* ---------- data ---------- */

const toolGroups: React.ComponentType[][] = [
  [NewDocIcon, OpenIcon, ImportIcon, SaveIcon, ExportIcon],
  [DiskIcon, CheckIcon, BinderIcon, DatabaseIcon, StackUpIcon],
  [UndoIcon, RedoIcon],
  [RefreshIcon, GlobeIcon],
  [DocHelpIcon],
];

const categories = [
  { name: "ACPI", width: 81, track: -0.2, Art: BulbIcon },
  { name: "Booter", width: 112, track: 0.5, Art: TerminalIcon },
  { name: "DeviceProperties", width: 219, track: 0.43, Art: ChecklistIcon },
  { name: "Kernel", width: 111, track: 0.55, Art: ChipIcon, shift: 5 },
  { name: "Misc", width: 82, track: 0.22, Art: GearsIcon, active: true, shift: 2 },
  { name: "NVRAM", width: 119, track: 0.5, Art: NvramIcon },
  { name: "PlatformInfo", width: 166, track: 0.5, Art: ComputerIcon },
  { name: "UEFI", width: 93, track: 0.5, Art: UefiIcon },
];

const tabs = [
  { name: "Boot", width: 79, track: 0.8 },
  { name: "Debug", width: 100, track: 0.8, active: true },
  { name: "Security", width: 120, track: 0.1 },
  { name: "BlessOverride", width: 195, track: 0.7 },
  { name: "Entries", width: 103, track: 0.5 },
  { name: "Tools", width: 88, track: 0.7 },
];

const flags: [string, number, boolean?][] = [
  ["DEBUG_INIT", 1.09],
  ["DEBUG_WARN", 1.65, true],
  ["DEBUG_LOAD", 1.13],
  ["DEBUG_FS", 1.3],
  ["DEBUG_POOL", 1.21],
  ["DEBUG_PAGE", 1.1],
  ["DEBUG_INFO", 1.09],
  ["DEBUG_DISPATCH", 0.84],
  ["DEBUG_VARIABLE", 0.97],
  ["DEBUG_BM", 1.35],
  ["DEBUG_BLKIO", 1.06],
  ["DEBUG_NET", 1.15],
  ["DEBUG_UNDI", 1.55],
  ["DEBUG_LOADFILE", 0.77],
  ["DEBUG_EVENT", 0.94],
  ["DEBUG_GCD", 1.9],
  ["DEBUG_CACHE", 1.39],
  ["DEBUG_VERBOSE", 1.17],
  ["DEBUG_ERROR", 1.12, true],
];

const options: [string, number][] = [
  ["AppleDebug", 0.45],
  ["ApplePanic", 0.4],
  ["DisableWatchDog", 0.79],
  ["SerialInit", 0.3],
  ["SysReport", 0.5],
];

const results: [string, number][] = [
  ["31F68A0F84C97504FFC", 0.5],
  ["31F68A0F84C97504FFC", 0.5],
  ["B14B66BAFD03ECA8207", 0.38],
  ["Resolution(e.g.1920x108", 0.5],
  ["322E343646303132000", 0.6],
  ["01/05/2021", 0.6],
  ["20", 0.7],
];

const CheckItem = ({ label, track, on }: { label: string; track: number; on?: boolean }) => (
  <Check $track={track}>
    <Tick $on={on}>
      {on && (
        <svg width="18" height="20" viewBox="0 0 18 20" fill="none">
          <path d="M2 11.500l5 5.500L16 2.500" stroke="#fff" strokeWidth="3.600" strokeLinecap="round" strokeLinejoin="round" />
        </svg>
      )}
    </Tick>
    {label}
  </Check>
);

export default function App() {
  return (
    <Desktop>
      <Global />
      <Window>
        <TitleBar>
          <Lights>
            <Light $fill="#ff3b4e" $rim="#e22c3f">
              <LightDot />
            </Light>
            <Light $fill="#ffc400" $rim="#e6ac00" />
            <Light $fill="#00dc2f" $rim="#00bf26" />
          </Lights>
          <TitlePart $width={255} $track={0.5}>OC Auxiliary Tools</TitlePart>
          <TitlePart $width={110} $track={0.1}>V0.6.8</TitlePart>
          <TitlePart $width={188} $track={1.44}>20210313</TitlePart>
          <TitlePart $width={1400} $track={0.67}>
            /Users/zh/Downloads/macOS XCODE5 Artifacts (25)/OpenCore-0.6.8-RELEASE/Docs/SampleCustom.plist
          </TitlePart>
        </TitleBar>

        <Toolbar>
          <Handle>
            <i /><i /><i /><i /><i />
          </Handle>
          {toolGroups.map((group, g) => (
            <React.Fragment key={g}>
              <ToolGroup>
                {group.map((Art, i) => (
                  <Tool key={i}>
                    <Art />
                  </Tool>
                ))}
              </ToolGroup>
              <Separator />
            </React.Fragment>
          ))}
          <MatchCount>7 ( 7 )</MatchCount>
          <SearchBox>
            <BroomIcon />
            <SearchValue>20</SearchValue>
            <RoundButton kind="close" />
            <ComboButton>
              <svg width="14" height="10" viewBox="0 0 14 10" fill="none">
                <path d="M2 2l5 5.500L12 2" stroke="#fff" strokeWidth="2.800" strokeLinecap="round" strokeLinejoin="round" />
              </svg>
            </ComboButton>
          </SearchBox>
          <ToolGroup>
            <Tool><FindIcon /></Tool>
            <Tool><ArrowIcon /></Tool>
            <Tool><ArrowIcon flip /></Tool>
          </ToolGroup>
          <Separator />
          <Tool><HelpIcon /></Tool>
        </Toolbar>

        <Body>
          <Main>
            <CategoryBar>
              {categories.map(({ name, width, track, Art, active, shift }) => (
                <Category key={name} $width={width} $shift={shift}>
                  <Art />
                  <CategoryLabel $active={active} $track={track}>{name}</CategoryLabel>
                </Category>
              ))}
            </CategoryBar>
            <TabBar>
              {tabs.map((t) => (
                <Tab key={t.name} $width={t.width} $track={t.track} $active={t.active}>{t.name}</Tab>
              ))}
            </TabBar>

            <LevelPanel>
              <Text $track={0.6} $nudge={-1}>DisplayLevel</Text>
              <LevelRow>
                <Field $width={560}>2147483650</Field>
                <Spacer $width={12} />
                <Callout $width={220} $height={60}>
                  <Spacer $width={21} />
                  <Text $track={0.83}>0x80000002</Text>
                </Callout>
                <Spacer $width={247} />
                <PushButton>Select all</PushButton>
                <PushButton>Clear</PushButton>
              </LevelRow>
              <FlagGrid>
                {flags.map(([label, track, on]) => (
                  <CheckItem key={label} label={label} track={track} on={on} />
                ))}
              </FlagGrid>
            </LevelPanel>

            <Lower>
              <Fields>
                <FieldRow>
                  <Text $width={178} $track={0.56}>DisplayDelay</Text>
                  <Field $width={293}>0</Field>
                </FieldRow>
                <FieldRow>
                  <Text $width={178} $track={0.15}>Target</Text>
                  <Field $width={293}>3</Field>
                  <Spacer $width={21} />
                  <Text $width={57} $track={-0.5}>{"<=="}</Text>
                  <Text $width={66} $track={0.2}>HEX</Text>
                  <Text $width={33} $track={1}>0x</Text>
                  <Callout $width={349} $height={70} $drop={3}>
                    <Spacer $width={14} />
                    <Field $width={293}>3</Field>
                  </Callout>
                </FieldRow>
              </Fields>
              <Options>
                {options.map(([label, track]) => (
                  <CheckItem key={label} label={label} track={track} />
                ))}
              </Options>
            </Lower>

            <Notes>
              <p>
                <Han>同步显示</Han><Digits>16</Digits><Han>进制。</Han>
              </p>
              <p>Synchronous display of hexadecimal.</p>
            </Notes>
          </Main>

          <Dock>
            <DockHeader>
              <RoundButton kind="close" />
              <RoundButton kind="float" />
              <DockTitle>Search results</DockTitle>
            </DockHeader>
            <ResultList>
              {results.map(([value, track], i) => (
                <Result key={i} $track={track} $active={i === results.length - 1}>{value}</Result>
              ))}
              <ScrollTrack>
                <ScrollThumb />
              </ScrollTrack>
            </ResultList>
          </Dock>
        </Body>
        <StatusBar />
      </Window>
    </Desktop>
  );
}
